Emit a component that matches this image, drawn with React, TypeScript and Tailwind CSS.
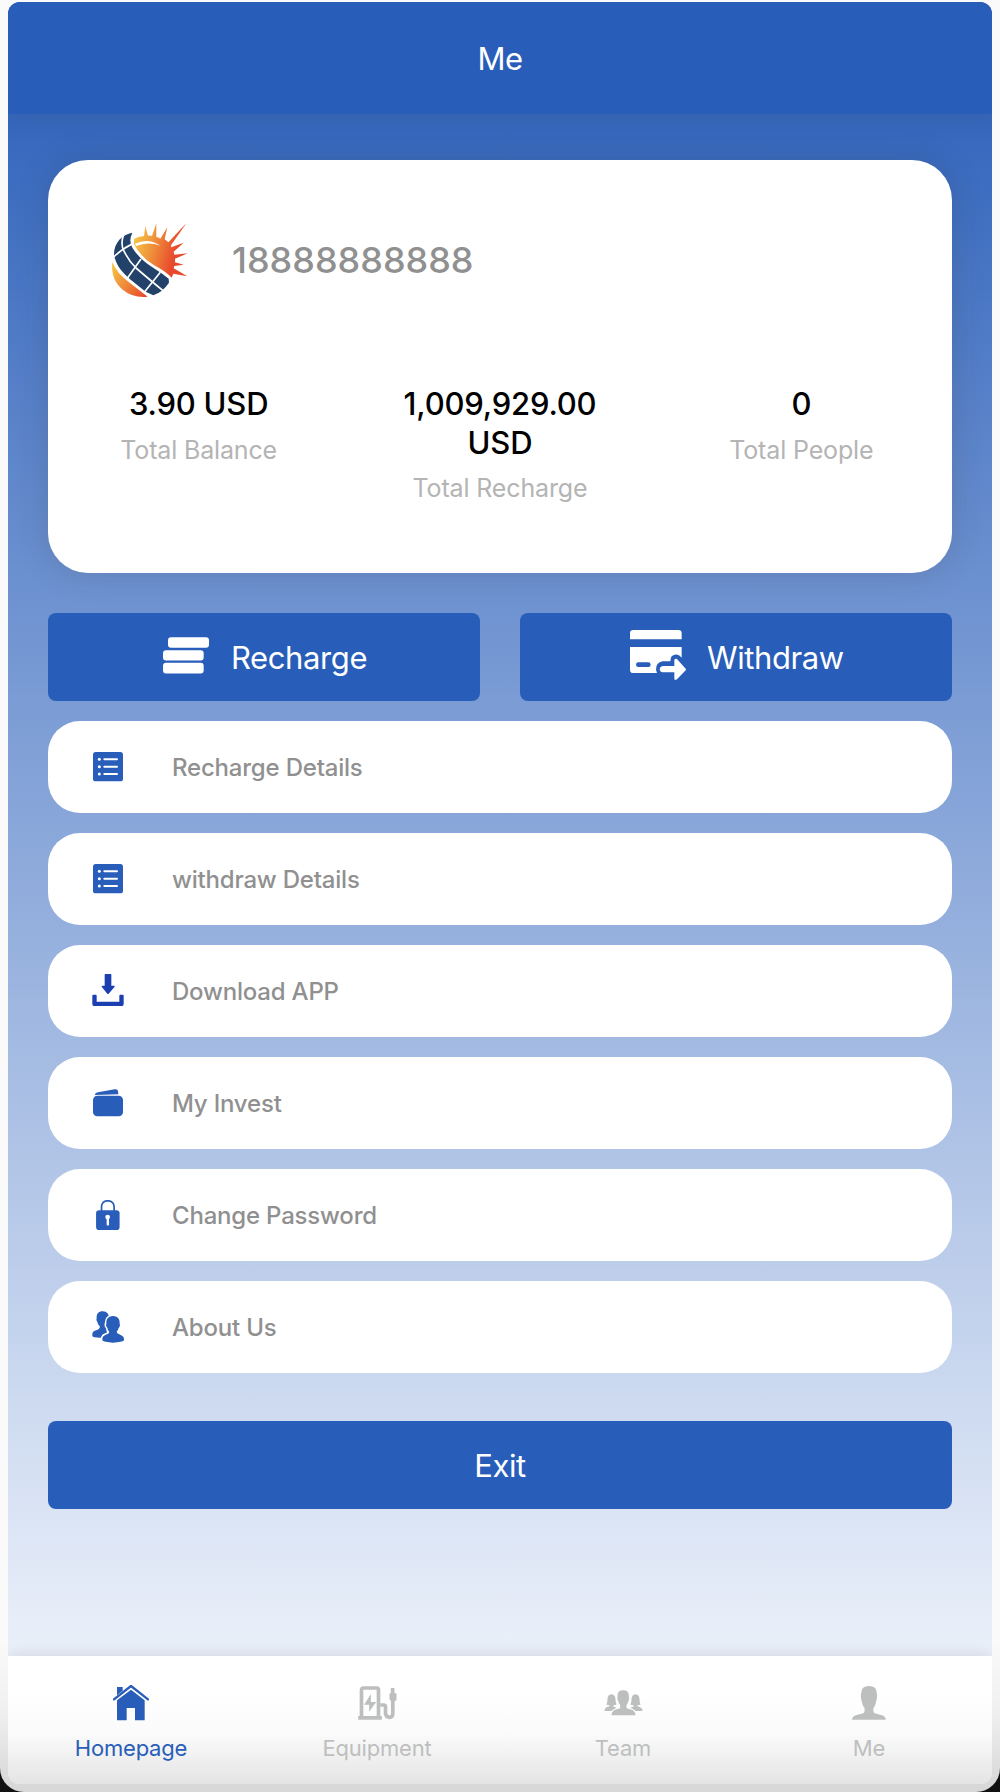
import React from 'react';

type IconProps = { className?: string };

const LogoIcon: React.FC<IconProps> = ({ className }) => (
  <svg viewBox="60 60 240 240" className={className}>
    <defs>
      <linearGradient id="sun" gradientUnits="userSpaceOnUse" x1="132" y1="130" x2="256" y2="165">
        <stop offset="0" stopColor="#f5c345" />
        <stop offset="0.45" stopColor="#ef8f3a" />
        <stop offset="1" stopColor="#e8482c" />
      </linearGradient>
      <linearGradient id="base" gradientUnits="userSpaceOnUse" x1="66" y1="200" x2="165" y2="290">
        <stop offset="0" stopColor="#f5c345" />
        <stop offset="0.5" stopColor="#ef8a3a" />
        <stop offset="1" stopColor="#e8482c" />
      </linearGradient>
    </defs>
    <path
      d="M132 117Q144 110 162 108L166 79L174 107Q180 106 186 108L199 70L199 111Q206 112 211 116L232 82L224 118Q230 122 235 127L289 70L243 136L244 142L281 128L251 155L253 164L293 160L255 176V187L281 194L253 198L251 205L292 229L250 221L245 233Q228 214 190 194Q152 171 132 133Z"
      fill="url(#sun)"
    />
    <path d="M135 131Q176 112 211 137Q174 123 138 138Z" fill="#fff" />
    <path d="M67 186Q79 219 119 248L173 290Q130 295 98 269Q61 238 67 186Z" fill="url(#base)" />
    <path
      d="M127 98C96 104 71 128 72 166C79 198 98 219 122 239L167 275L190 286Q218 276 237 248L236 236Q218 221 194 206Q150 180 127 143Q115 123 127 98Z"
      fill="#23426a"
    />
    <g fill="none" stroke="#fff" strokeWidth="5">
      <path d="M101 104Q91 130 101 151Q116 183 138 204Q174 235 219 272" />
      <path d="M71 171Q96 146 128 131M112 235L153 177M164 275L211 217" />
    </g>
  </svg>
);

const CoinsIcon: React.FC<IconProps> = ({ className }) => (
  <svg viewBox="0 0 138 110" fill="currentColor" className={className}>
    <rect x="15" y="0" width="123" height="32" rx="9" />
    <rect x="0" y="39" width="122" height="31" rx="9" />
    <rect x="0" y="77" width="122" height="32" rx="9" />
  </svg>
);

const CardIcon: React.FC<IconProps> = ({ className }) => (
  <svg viewBox="0 0 168 150" fill="currentColor" className={className}>
    <path d="M10 0H145Q155 0 155 10V28H0V10Q0 0 10 0Z" />
    <path
      fillRule="evenodd"
      d="M0 51H155V83L149 77Q136 69 125 79Q121 84 121 94H98Q77 98 78 119L81 129H10Q0 129 0 119ZM25 97A7 7 0 0 0 25 111H55A7 7 0 0 0 55 97Z"
    />
    <path d="M98 108H133V90Q135 84 141 87L167 116Q169 119 167 121L141 148Q133 152 133 146V127H98Q89 126 89 117Q90 109 98 108Z" />
  </svg>
);

const ListIcon: React.FC<IconProps> = ({ className }) => (
  <svg viewBox="0 0 90 90" className={className}>
    <rect width="90" height="88" rx="8" fill="currentColor" />
    <g fill="#fff">
      <circle cx="19" cy="22" r="4.5" />
      <circle cx="19" cy="44" r="4.5" />
      <circle cx="19" cy="66" r="4.5" />
      <rect x="31" y="19" width="44" height="6" rx="3" />
      <rect x="31" y="41" width="44" height="6" rx="3" />
      <rect x="31" y="63" width="44" height="6" rx="3" />
    </g>
  </svg>
);

const DownloadIcon: React.FC<IconProps> = ({ className }) => (
  <svg viewBox="0 0 96 96" fill="#1b3fb0" className={className}>
    <path d="M39 0H57Q58 0 58 2V35H67Q69 36 68 38L50 59Q48 61 46 59L29 38Q28 35 31 35H38V2Z" />
    <path d="M2 62H11Q14 62 14 65V83H82V65Q82 62 85 62H92Q95 62 95 65V89Q95 97 87 97H9Q1 97 1 89V65Q1 62 4 62Z" />
  </svg>
);

const WalletIcon: React.FC<IconProps> = ({ className }) => (
  <svg viewBox="0 0 90 84" fill="currentColor" className={className}>
    <path d="M5 18Q7 11 15 10L65 1Q73 -1 75 6L76 16Z" />
    <rect y="20" width="90" height="62" rx="13" />
  </svg>
);

const LockIcon: React.FC<IconProps> = ({ className }) => (
  <svg viewBox="0 0 70 88" className={className}>
    <path d="M16 34V20Q17 3 34 2Q52 3 53 20V34" fill="none" stroke="currentColor" strokeWidth="5" />
    <rect y="30" width="69" height="58" rx="9" fill="currentColor" />
    <circle cx="34" cy="50" r="7" fill="#fff" />
    <path d="M31 52H38V73Q35 77 31 73Z" fill="#fff" />
  </svg>
);

const FriendsIcon: React.FC<IconProps> = ({ className }) => (
  <svg viewBox="0 0 96 96" className={className}>
    <path
      d="M32 1C45 1 52 10 50 22Q54 30 48 36Q44 43 43 48L46 78L26 80Q2 80 1 75V68Q3 59 15 57Q23 54 24 47Q17 41 16 33Q11 29 14 22C13 8 20 1 32 1Z"
      fill="currentColor"
    />
    <path
      d="M63 15C76 15 84 24 83 37Q86 45 80 51Q78 58 74 62Q74 67 82 70L90 74Q96 77 96 84V88Q91 94 63 95Q36 94 31 88V82Q32 74 41 71Q51 69 52 63Q47 58 46 50Q40 45 43 37C42 24 50 15 63 15Z"
      fill="currentColor"
      stroke="#fff"
      strokeWidth="9"
      paintOrder="stroke"
    />
  </svg>
);

const HomeIcon: React.FC<IconProps> = ({ className }) => (
  <svg viewBox="0 0 108 108" className={className}>
    <path d="M12 6H29V17L12 31Z" fill="currentColor" />
    <path d="M3 43L54 3L105 43" fill="none" stroke="currentColor" strokeWidth="7" strokeLinecap="round" strokeLinejoin="round" />
    <path d="M54 14L95 46V106H66V69H41V106H12V46Z" fill="currentColor" />
  </svg>
);

const ChargerIcon: React.FC<IconProps> = ({ className }) => (
  <svg viewBox="0 0 116 102" className={className}>
    <g fill="none" stroke="currentColor">
      <path d="M10 94V12Q10 6 16 6H56Q61 6 61 12V94" strokeWidth="11" />
      <path d="M66 57H77Q82 57 82 63V83Q84 94 94 94Q104 94 104 82V42" strokeWidth="11" />
    </g>
    <path d="M0 90H71V101H0ZM38 24V48H54L33 77V56H18ZM98 6H109V22H115V42Q112 46 107 46H101Q95 45 94 40V22H98Z" fill="currentColor" />
  </svg>
);

const TeamIcon: React.FC<IconProps> = ({ className }) => (
  <svg viewBox="0 0 116 78" fill="currentColor" className={className}>
    <path d="M22 13Q34 14 34 28Q34 37 37 44L28 46V50L38 53Q23 60 22 63H1Q0 53 16 49V46L7 44Q10 35 10 26Q11 14 22 13Z" />
    <path d="M94 13Q82 14 82 28Q82 37 79 44L88 46V50L78 53Q93 60 94 63H115Q116 53 100 49V46L109 44Q106 35 106 26Q105 14 94 13Z" />
    <path d="M57 1Q74 1 74 17Q77 27 72 35Q70 42 67 45V53Q69 57 78 58Q94 62 94 76H22Q22 62 37 58Q47 57 48 53V45Q44 41 43 35Q38 26 40 17Q40 1 57 1Z" />
  </svg>
);

const UserIcon: React.FC<IconProps> = ({ className }) => (
  <svg viewBox="0 0 100 100" fill="currentColor" className={className}>
    <path d="M50 0Q73 0 73 22Q75 31 73 38Q71 44 70 49Q68 60 63 65V75Q65 81 77 83Q96 86 99 96V99H0V96Q4 86 22 83Q36 81 37 75V65Q31 59 30 49Q28 45 27 38Q25 30 27 22Q27 0 50 0Z" />
  </svg>
);

const stats = [
  { value: '3.90 USD', label: 'Total Balance' },
  { value: '1,009,929.00 USD', label: 'Total Recharge' },
  { value: '0', label: 'Total People' },
];

const menu = [
  { label: 'Recharge Details', icon: <ListIcon className="h-[30px] w-[30px]" /> },
  { label: 'withdraw Details', icon: <ListIcon className="h-[30px] w-[30px]" /> },
  { label: 'Download APP', icon: <DownloadIcon className="-mt-0.5 h-8 w-8" /> },
  { label: 'My Invest', icon: <WalletIcon className="h-7 w-[30px]" /> },
  { label: 'Change Password', icon: <LockIcon className="h-[30px] w-6" /> },
  { label: 'About Us', icon: <FriendsIcon className="h-8 w-8" /> },
];

const tabs = [
  { label: 'Homepage', icon: <HomeIcon className="h-9 w-9" />, active: true },
  { label: 'Equipment', icon: <ChargerIcon className="h-[34px] w-[39px]" /> },
  { label: 'Team', icon: <TeamIcon className="h-[26px] w-[39px]" /> },
  { label: 'Me', icon: <UserIcon className="h-[34px] w-[34px]" /> },
];

const App: React.FC = () => {
  return (
    <div className="h-[1792px] w-[1000px] bg-[#111] font-[Inter,sans-serif]">
      <div className="h-full rounded-b-[24px] bg-[linear-gradient(#fafafa_0,#fafafa_1640px,#f0f0f0_1710px,#d8d8d8_1784px)] px-2 pt-0.5">
        <div className="flex h-[1782px] flex-col overflow-hidden rounded-xl bg-[linear-gradient(#285db9,#fafcff)]">
          <header className="flex h-28 shrink-0 items-center justify-center bg-[#285db9] pt-0.5 text-[31px] tracking-[-0.5px] text-white shadow-[0_0_24px_rgba(60,60,60,0.2)]">
            Me
          </header>

          <main className="flex-1 px-10 pt-[46px]">
            <section className="h-[413px] rounded-[40px] bg-white pt-[60px] shadow-[0_0_32px_rgba(50,50,50,0.18)]">
              <div className="flex h-20 items-center pl-[62px]">
                <LogoIcon className="h-20 w-20" />
                <span className="ml-[42px] text-[36px] font-medium text-[#909090]">18888888888</span>
              </div>
              <div className="mt-[85px] grid grid-cols-3 text-center">
                {stats.map((stat) => (
                  <div key={stat.label} className="px-10">
                    <div className="text-[31px] leading-[38.5px] font-medium tracking-[-0.2px] text-black">{stat.value}</div>
                    <div className="mt-[7px] text-[25px] leading-[38px] tracking-[-0.15px] text-[#b4b4b4]">{stat.label}</div>
                  </div>
                ))}
              </div>
            </section>

            <div className="mt-10 grid grid-cols-2 gap-10 text-[31px] tracking-[-0.4px] text-white">
              <button className="flex h-[88px] items-center rounded-lg bg-[#285db9] pl-[115px]">
                <CoinsIcon className="-mt-1 h-[37px] w-[46px]" />
                <span className="ml-[22px] pt-0.5">Recharge</span>
              </button>
              <button className="flex h-[88px] items-center rounded-lg bg-[#285db9] pl-[110px]">
                <CardIcon className="-mt-1 h-[50px] w-14" />
                <span className="ml-[21px] pt-0.5">Withdraw</span>
              </button>
            </div>

            <ul className="mt-5 space-y-5">
              {menu.map((item) => (
                <li key={item.label} className="flex h-[92px] items-center rounded-[32px] bg-white pl-11 text-[#285db9]">
                  <span className="flex w-8 justify-center">{item.icon}</span>
                  <span className="ml-12 pt-0.5 text-2xl font-medium tracking-[-0.2px] text-[#909090]">{item.label}</span>
                </li>
              ))}
            </ul>

            <button className="mt-12 h-[88px] w-full rounded-lg bg-[#285db9] pt-0.5 text-[31px] tracking-[-0.4px] text-white">
              Exit
            </button>
          </main>

          <nav className="grid h-32 shrink-0 grid-cols-4 bg-[linear-gradient(#fff_30%,#fafafa_62%,#e4e4e4)] shadow-[0_0_16px_rgba(0,0,0,0.14)]">
            {tabs.map((tab) => (
              <a
                key={tab.label}
                className={tab.active ? 'flex flex-col items-center text-[#285db9]' : 'flex flex-col items-center text-[#bdbfbe]'}
              >
                <span className="mt-[27px] flex h-10 items-center">{tab.icon}</span>
                <span className="mt-[9px] text-[22px] leading-8 tracking-[-0.2px]">{tab.label}</span>
              </a>
            ))}
          </nav>
        </div>
      </div>
    </div>
  );
};

export default App;
